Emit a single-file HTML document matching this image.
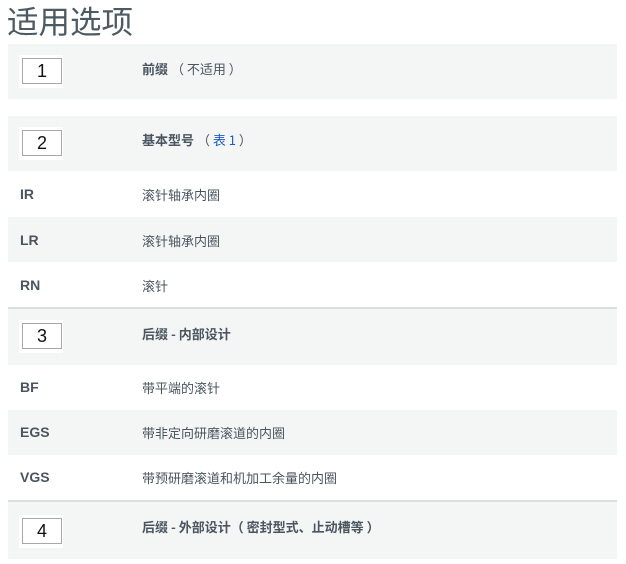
<!DOCTYPE html>
<html><head><meta charset="utf-8"><style>
body{margin:0;width:626px;height:564px;background:#fff;font-family:"Liberation Sans","Noto Sans CJK SC",sans-serif;color:#4a5560;position:relative;overflow:hidden}
h1{position:absolute;left:7px;top:0px;margin:0;font-weight:normal;font-size:31.5px;line-height:40px;color:#4c5a64;font-family:"Noto Sans CJK SC",sans-serif}
.r{position:absolute;left:8px;width:609px}
.g{background:#f4f6f6}
.b{border-top:2px solid #dcdfe2}
.k{position:absolute;left:12px;font-weight:bold;font-size:14px}
.t{position:absolute;left:134px;font-size:13px;font-family:"Noto Sans CJK SC",sans-serif}
.h{font-weight:bold}
.box{position:absolute;left:11px;width:44px;height:33px;background:#fff}
.box span{position:absolute;left:3px;top:3px;width:38px;height:24px;border:1px solid #a8a8a8;text-align:center;line-height:25px;font-size:18px;color:#111}
a{color:#1a5fc8;text-decoration:none}
</style></head><body>
<h1>适用选项</h1>
<div class="r g" style="top:44px;height:55px"><div class="box" style="top:11px"><span>1</span></div><div class="t h" style="top:15px">前缀 <span style="font-weight:normal">（ 不适用 ）</span></div></div>
<div class="r g" style="top:116px;height:55px"><div class="box" style="top:11px"><span>2</span></div><div class="t h" style="top:14px">基本型号 <span style="font-weight:normal">（ <a>表 1</a> ）</span></div></div>
<div class="r" style="top:171px;height:46px"><div class="k" style="top:15px">IR</div><div class="t" style="top:14px">滚针轴承内圈</div></div>
<div class="r g" style="top:217px;height:45px"><div class="k" style="top:15px">LR</div><div class="t" style="top:14px">滚针轴承内圈</div></div>
<div class="r" style="top:262px;height:45px"><div class="k" style="top:15px">RN</div><div class="t" style="top:14px">滚针</div></div>
<div class="r g b" style="top:307px;height:56px"><div class="box" style="top:11px"><span>3</span></div><div class="t h" style="top:15px">后缀 - 内部设计</div></div>
<div class="r" style="top:365px;height:45px"><div class="k" style="top:14px">BF</div><div class="t" style="top:13px">带平端的滚针</div></div>
<div class="r g" style="top:410px;height:45px"><div class="k" style="top:14px">EGS</div><div class="t" style="top:13px">带非定向研磨滚道的内圈</div></div>
<div class="r" style="top:455px;height:45px"><div class="k" style="top:14px">VGS</div><div class="t" style="top:13px">带预研磨滚道和机加工余量的内圈</div></div>
<div class="r g b" style="top:500px;height:57px"><div class="box" style="top:13px"><span>4</span></div><div class="t h" style="top:15px">后缀 - 外部设计（ 密封型式、止动槽等 ）</div></div>
</body></html>
